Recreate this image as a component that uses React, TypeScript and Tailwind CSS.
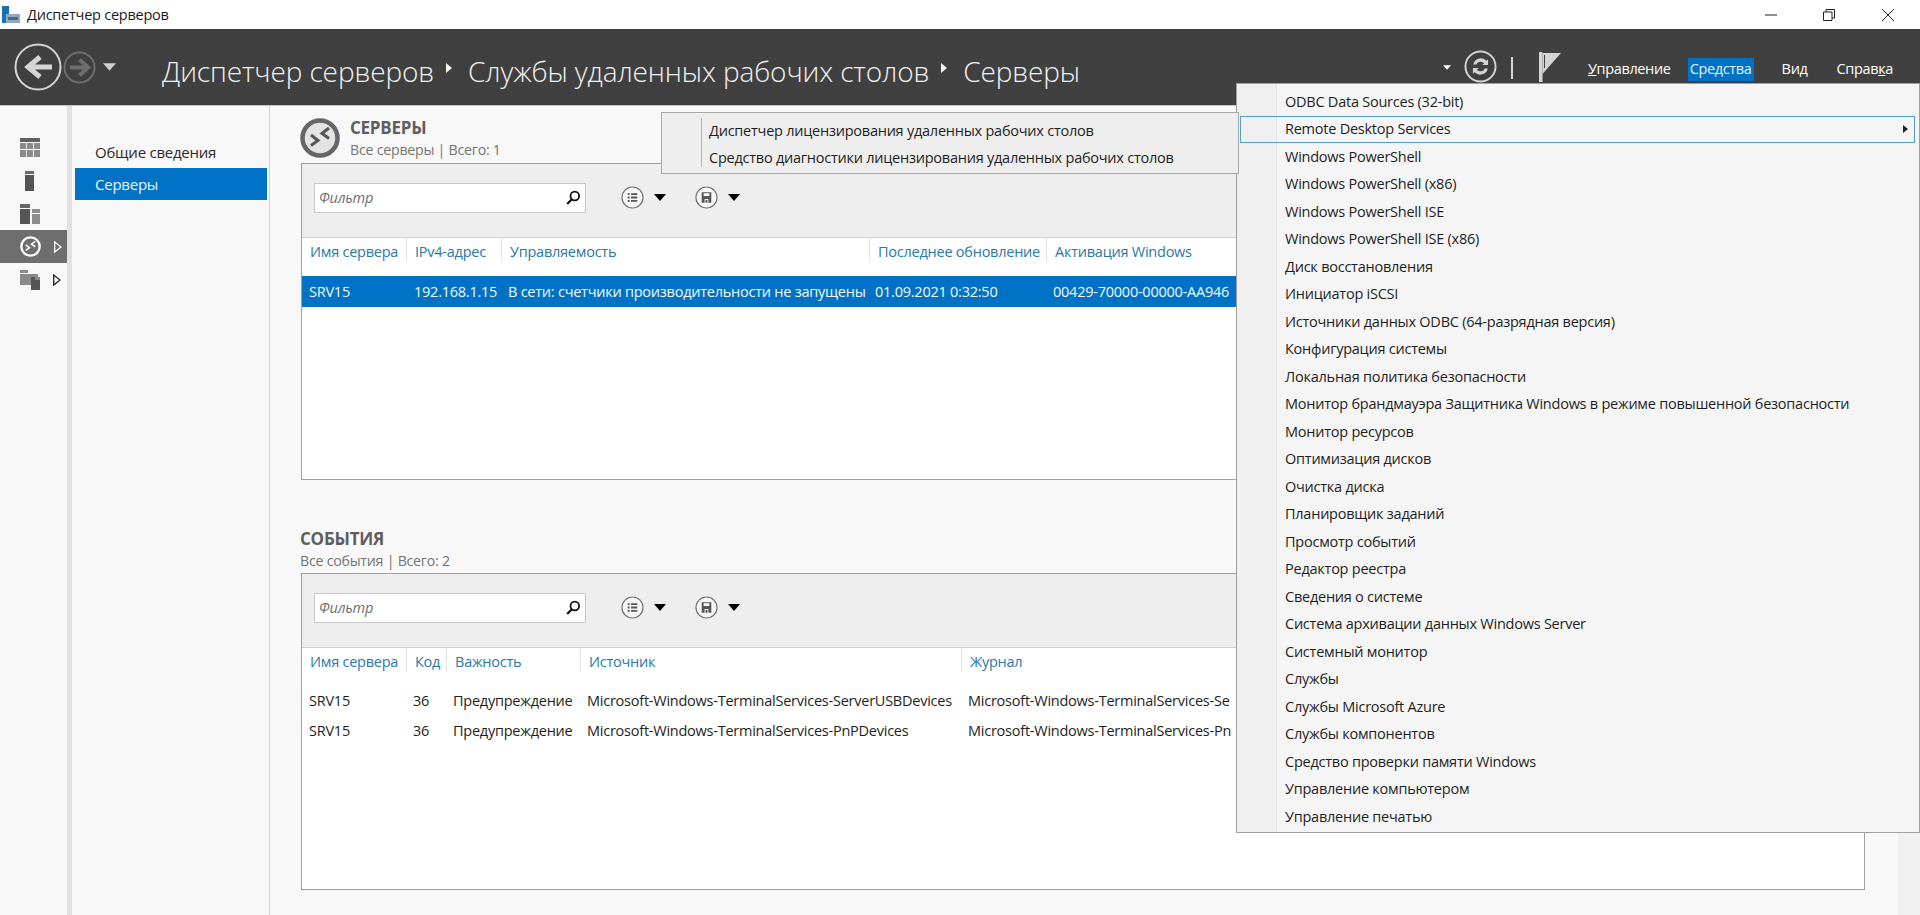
import React from 'react';

const toolItems = [
  'ODBC Data Sources (32-bit)',
  'Remote Desktop Services',
  'Windows PowerShell',
  'Windows PowerShell (x86)',
  'Windows PowerShell ISE',
  'Windows PowerShell ISE (x86)',
  'Диск восстановления',
  'Инициатор iSCSI',
  'Источники данных ODBC (64-разрядная версия)',
  'Конфигурация системы',
  'Локальная политика безопасности',
  'Монитор брандмауэра Защитника Windows в режиме повышенной безопасности',
  'Монитор ресурсов',
  'Оптимизация дисков',
  'Очистка диска',
  'Планировщик заданий',
  'Просмотр событий',
  'Редактор реестра',
  'Сведения о системе',
  'Система архивации данных Windows Server',
  'Системный монитор',
  'Службы',
  'Службы Microsoft Azure',
  'Службы компонентов',
  'Средство проверки памяти Windows',
  'Управление компьютером',
  'Управление печатью',
];

const serverCols = [
  { label: 'Имя сервера', width: 'w-[104px]' },
  { label: 'IPv4-адрес', width: 'w-[95px]' },
  { label: 'Управляемость', width: 'w-[368px]' },
  { label: 'Последнее обновление', width: 'w-[177px]' },
  { label: 'Активация Windows', width: 'w-[190px]' },
];

const eventCols = [
  { label: 'Имя сервера', width: 'w-[104px]' },
  { label: 'Код', width: 'w-[40px]' },
  { label: 'Важность', width: 'w-[134px]' },
  { label: 'Источник', width: 'w-[381px]' },
  { label: 'Журнал', width: 'w-[275px]' },
];

// the log column runs under the open menu, only its start is visible
const eventRows = [
  ['SRV15', '36', 'Предупреждение', 'Microsoft-Windows-TerminalServices-ServerUSBDevices', 'Microsoft-Windows-TerminalServices-Se'],
  ['SRV15', '36', 'Предупреждение', 'Microsoft-Windows-TerminalServices-PnPDevices', 'Microsoft-Windows-TerminalServices-Pn'],
];

function Caret({ className }: { className: string }) {
  return (
    <svg viewBox="0 0 12 7" className={className}>
      <path d="M0 0h12L6 7z" fill="currentColor" />
    </svg>
  );
}

function ListIcon() {
  return (
    <svg viewBox="0 0 24 24" className="w-[23px] h-[23px]">
      <circle cx="12" cy="12" r="11" fill="#f6f6f6" stroke="#707070" strokeWidth="1.2" />
      <path d="M7 7.500h2v2H7zM7 11h2v2H7zM7 14.500h2v2H7zM10.500 7.500H17v2h-6.500zM10.500 11H17v2h-6.500zM10.500 14.500H17v2h-6.500z" fill="#555" />
    </svg>
  );
}

function SaveIcon() {
  return (
    <svg viewBox="0 0 24 24" className="w-[23px] h-[23px]">
      <circle cx="12" cy="12" r="11" fill="#f6f6f6" stroke="#707070" strokeWidth="1.2" />
      <path d="M7 6.500h10v11h-3v-4h-4v4H7z" fill="#555" />
      <path d="M9 7.500h6v3H9z" fill="#f6f6f6" />
      <path d="M11 14.500h2v3h-2z" fill="#555" />
    </svg>
  );
}

function SearchIcon() {
  return (
    <svg viewBox="0 0 16 16" className="w-[16px] h-[16px]">
      <circle cx="9.800" cy="6" r="4.300" fill="none" stroke="#111" strokeWidth="1.800" />
      <path d="M6.800 9.200L2.200 14" stroke="#111" strokeWidth="2.200" />
    </svg>
  );
}

function RdsIcon({ className, ring, fill, mark }: { className: string; ring: string; fill: string; mark: string }) {
  return (
    <svg viewBox="0 0 40 40" className={className}>
      <circle cx="20" cy="20" r="17.500" fill={fill} stroke={ring} strokeWidth="4.500" />
      <path d="M11 18l7 5.500-7 5M29 11l-7 5.500 7 5" transform="translate(0 -1)" fill="none" stroke={mark} strokeWidth="3" />
    </svg>
  );
}

function Toolbar() {
  return (
    <div className="h-[74px] bg-[#eeeeee] border-b border-[#cfcfcf] flex items-center pl-[12px] pb-[6px] shrink-0">
      <div className="w-[272px] h-[30px] bg-white border border-[#c8c8c8] flex items-center justify-between pl-[4px] pr-[4px]">
        <span className="italic text-[#6e6e6e]">Фильтр</span>
        <SearchIcon />
      </div>
      <div className="ml-[35px] flex items-center gap-[10px] text-black">
        <ListIcon />
        <Caret className="w-[12px] h-[7px]" />
      </div>
      <div className="ml-[29px] flex items-center gap-[10px] text-black">
        <SaveIcon />
        <Caret className="w-[12px] h-[7px]" />
      </div>
    </div>
  );
}

function HeaderRow({ cols }: { cols: { label: string; width: string }[] }) {
  return (
    <div className="flex h-[38px] shrink-0 relative">
      {cols.map((c, i) => (
        <div
          key={c.label}
          className={`${c.width} shrink-0 pl-[8px] pt-[4px] text-[#2a78a8] whitespace-nowrap h-[24px] ${i > 0 ? 'border-l border-[#e2e2e2]' : ''}`}
        >
          {c.label}
        </div>
      ))}
    </div>
  );
}

function App() {
  return (
    <div className="relative w-[1920px] h-[915px] overflow-hidden flex flex-col bg-[#f8f8f8] text-[14.500px] leading-[20px] tracking-[-0.240px] text-[#1e1e1e] font-['Open_Sans','Noto_Sans',sans-serif]">
      {/* Title bar */}
      <div className="h-[29px] bg-white flex items-center shrink-0">
        <svg viewBox="0 0 20 18" className="w-[20px] h-[18px] ml-[1px] mr-[6px]">
          <path d="M1 0h7v10H1z" fill="#1b6fb5" />
          <path d="M1 10h4v7H1z" fill="#1b6fb5" />
          <path d="M5 8h14v9H5z" fill="#8fa9bf" />
          <path d="M7 11h10v3H7z" fill="#4d6a84" />
        </svg>
        <span className="text-[#1a1a1a]">Диспетчер серверов</span>
        <div className="ml-auto flex items-center h-full">
          <svg viewBox="0 0 12 12" className="w-[12px] h-[12px] mr-[46px]">
            <path d="M0 6h12" stroke="#222" strokeWidth="1" />
          </svg>
          <svg viewBox="0 0 12 12" className="w-[12px] h-[12px] mr-[47px]">
            <path d="M.5 3h8.500v8.500H.5zM3 3V.5h8.500V9H9" fill="none" stroke="#222" strokeWidth="1" />
          </svg>
          <svg viewBox="0 0 12 12" className="w-[12px] h-[12px] mr-[26px]">
            <path d="M0 0l12 12M12 0L0 12" stroke="#222" strokeWidth="1" />
          </svg>
        </div>
      </div>

      {/* Header */}
      <div className="h-[77px] bg-[#404040] border-b border-[#c4c4c4] flex items-center shrink-0 text-white">
        <svg viewBox="0 0 48 48" className="w-[48px] h-[48px] ml-[14px]">
          <circle cx="24" cy="24" r="22.500" fill="none" stroke="#d6d6d6" strokeWidth="2" />
          <path d="M38 24H17M26 14L14 24l12 10" fill="none" stroke="#d6d6d6" strokeWidth="5" />
        </svg>
        <svg viewBox="0 0 34 34" className="w-[33px] h-[33px] ml-[1px]">
          <circle cx="17" cy="17" r="15.500" fill="none" stroke="#6e6e6e" strokeWidth="2" />
          <path d="M7 17h17M17 9l9 8-9 8" fill="none" stroke="#6e6e6e" strokeWidth="4" />
        </svg>
        <Caret className="w-[13px] h-[8px] ml-[7px] text-[#cfcfcf]" />
        <div className="ml-[46px] mt-[8px] flex items-center text-[28px] font-light tracking-[-0.120px] text-[#f2f2f2] leading-[36px] whitespace-nowrap">
          <span>Диспетчер серверов</span>
          <svg viewBox="0 0 6 10" className="w-[6px] h-[10px] ml-[12px] mr-[16px] mb-[6px]"><path d="M0 0l6 5-6 5z" fill="#f2f2f2" /></svg>
          <span>Службы удаленных рабочих столов</span>
          <svg viewBox="0 0 6 10" className="w-[6px] h-[10px] ml-[12px] mr-[16px] mb-[6px]"><path d="M0 0l6 5-6 5z" fill="#f2f2f2" /></svg>
          <span>Серверы</span>
        </div>
        <div className="ml-auto flex items-center h-full">
          <Caret className="w-[8px] h-[5px] text-white mr-[13px]" />
          <svg viewBox="0 0 34 34" className="w-[33px] h-[33px] mt-[-1px]">
            <circle cx="17" cy="17" r="15.500" fill="none" stroke="#d4d4d4" strokeWidth="2" />
            <path d="M9.500 15a8 8 0 0 1 13.500-4l1.800-1.500v6h-6l2-1.800a5 5 0 0 0-8.300 1.300zM24.500 19a8 8 0 0 1-13.500 4l-1.800 1.500v-6h6l-2 1.800a5 5 0 0 0 8.300-1.300z" fill="#d4d4d4" />
          </svg>
          <div className="w-[2px] h-[22px] bg-[#d4d4d4] ml-[14px] mt-[2px]" />
          <svg viewBox="0 0 22 30" className="w-[22px] h-[30px] ml-[26px]">
            <path d="M0 0h3.500v30H0z" fill="#d4d4d4" />
            <path d="M3.500 1H22L3.500 22z" fill="#d4d4d4" />
            <path d="M5 3h1v13H5z" fill="#404040" />
          </svg>
          <div className="flex items-center ml-[26px] text-[14.500px] tracking-[-0.350px] text-white mt-[4px] whitespace-nowrap">
            <span className="px-[1px]"><span className="underline">У</span>правление</span>
            <span className="ml-[16px] w-[66px] h-[23px] bg-[#0072c6] flex items-center justify-center text-[#e4f1fb]">Сре<span className="underline">д</span>ства</span>
            <span className="ml-[28px]">Ви<span className="underline">д</span></span>
            <span className="ml-[29px] mr-[27px]">Справ<span className="underline">к</span>а</span>
          </div>
        </div>
      </div>

      {/* Body */}
      <div className="flex flex-1 min-h-0">
        <div className="w-[67px] pt-[25px] shrink-0 bg-[#f8f8f8] flex flex-col">
          <div className="h-[33px] flex items-center pl-[20px]">
            <svg viewBox="0 0 20 19" className="w-[20px] h-[19px]">
              <path d="M0 0h20v4H0z" fill="#5f5f5f" />
              <path d="M0 5h6.200v6H0zM7 5h6v6H7zM14 5h6v6h-6zM0 12h6.200v7H0zM7 12h6v7H7zM14 12h6v7h-6z" fill="#8a8a8a" />
            </svg>
          </div>
          <div className="h-[33px] flex items-center pl-[25px]">
            <svg viewBox="0 0 9 20" className="w-[9px] h-[20px]">
              <path d="M0 0h9v3H0z" fill="#6a6a6a" />
              <path d="M0 4h9v16H0z" fill="#555" />
            </svg>
          </div>
          <div className="h-[33px] flex items-center pl-[20px]">
            <svg viewBox="0 0 20 20" className="w-[20px] h-[20px]">
              <path d="M0 0h10v4H0z" fill="#666" />
              <path d="M0 5h10v15H0z" fill="#555" />
              <path d="M12 5h8v4h-8z" fill="#8c8c8c" />
              <path d="M12 10h8v10h-8z" fill="#8c8c8c" />
            </svg>
          </div>
          <div className="h-[33px] bg-[#6e6e6e] flex items-center pl-[20px]">
            <RdsIcon className="w-[21px] h-[21px]" ring="#ffffff" fill="#6e6e6e" mark="#ffffff" />
            <svg viewBox="0 0 8 12" className="w-[8px] h-[12px] ml-[13px]">
              <path d="M.7.900l6.300 5.100-6.300 5.100z" fill="none" stroke="#ffffff" strokeWidth="1.300" />
            </svg>
          </div>
          <div className="h-[33px] flex items-center pl-[20px]">
            <svg viewBox="0 0 20 20" className="w-[20px] h-[20px]">
              <path d="M0 0h8v3H0zM0 4h18v11H0z" fill="#8a8a8a" />
              <path d="M11 7h9v13h-9z" fill="#555" />
              <path d="M15 7h5v3h-5z" fill="#8a8a8a" />
            </svg>
            <svg viewBox="0 0 8 12" className="w-[8px] h-[12px] ml-[13px]">
              <path d="M.7.900l6.300 5.100-6.300 5.100z" fill="none" stroke="#222222" strokeWidth="1.300" />
            </svg>
          </div>
        </div>
        <div className="w-[5px] bg-[#e1e1e1] shrink-0" />
        <div className="w-[198px] shrink-0 border-r border-[#d2d2d2] pt-[30px] pr-[2px] pl-[3px]">
          <div className="w-[192px] h-[32px] flex items-center pl-[20px] text-[#2a2a2a] text-[15px]">Общие сведения</div>
          <div className="w-[192px] h-[32px] flex items-center pl-[20px] bg-[#0072c6] text-[#eaf5fc] text-[15px]">Серверы</div>
        </div>

        {/* Content */}
        <div className="flex-1 pl-[31px] min-w-0 relative flex flex-col">
          <div className="h-[57px] flex items-start shrink-0 pt-[12px] ml-[-1px]">
            <RdsIcon className="w-[40px] h-[40px]" ring="#666666" fill="#e3e3e3" mark="#555555" />
            <div className="ml-[10px] mt-[-2px]">
              <div className="text-[17px] font-bold text-[#5e5e5e] leading-[24px]">СЕРВЕРЫ</div>
              <div className="text-[#757575] text-[14.200px] leading-[20px]">Все серверы | Всего: 1</div>
            </div>
          </div>
          <div className="w-[1564px] h-[317px] border border-[#a0a0a0] bg-white flex flex-col shrink-0">
            <Toolbar />
            <HeaderRow cols={serverCols} />
            <div className="flex h-[31px] items-center bg-[#0072c6] text-[#f0f8fd] whitespace-nowrap">
              <div className="w-[104px] shrink-0 pl-[7px]">SRV15</div>
              <div className="w-[95px] shrink-0 pl-[8px]">192.168.1.15</div>
              <div className="w-[367px] shrink-0 pl-[7px] overflow-hidden">В сети: счетчики производительности не запущены</div>
              <div className="w-[178px] shrink-0 pl-[7px]">01.09.2021 0:32:50</div>
              <div className="w-[189px] shrink-0 pl-[7px]">00429-70000-00000-AA946</div>
            </div>
          </div>

          <div className="mt-[47px] h-[46px] shrink-0 ml-[-1px]">
            <div className="text-[17px] font-bold text-[#5e5e5e] leading-[24px]">СОБЫТИЯ</div>
            <div className="text-[#757575] text-[14.200px] leading-[20px]">Все события | Всего: 2</div>
          </div>
          <div className="w-[1564px] h-[317px] border border-[#a0a0a0] bg-white flex flex-col shrink-0">
            <Toolbar />
            <HeaderRow cols={eventCols} />
            <div>
              {eventRows.map((row, r) => (
                <div key={r} className="flex h-[30px] items-center whitespace-nowrap">
                  {row.map((cell, i) => (
                    <div key={i} className={`${eventCols[i].width} shrink-0 pl-[7px]`}>{cell}</div>
                  ))}
                </div>
              ))}
            </div>
          </div>
        </div>
        <div className="w-[22px] bg-[#f0f0f0] shrink-0" />
      </div>

      {/* Tools menu */}
      <div className="absolute top-[83px] left-[1236px] right-0 h-[750px] bg-[#f5f5f5] border border-[#a0a0a0] pt-[4px]">
        <div className="absolute left-0 top-0 bottom-0 w-[40px] bg-[#efefef] border-r border-[#e4e4e4]" />
        <div className="relative">
          {toolItems.map((item, i) => (
            <div
              key={item}
              className={`h-[27.500px] flex items-center whitespace-nowrap ${i === 1 ? 'ml-[3px] mr-[4px] pl-[44px] border-[1.500px] border-[#4f9fd0] justify-between pr-[6px]' : 'pl-[48px]'}`}
            >
              <span>{item}</span>
              {i === 1 && (
                <svg viewBox="0 0 5 8" className="w-[5px] h-[8px]"><path d="M0 0l5 4-5 4z" fill="#222" /></svg>
              )}
            </div>
          ))}
        </div>
      </div>

      {/* Remote Desktop Services submenu */}
      <div className="absolute top-[112px] left-[661px] w-[578px] h-[62px] bg-[#eeeeee] border border-[#a8a8a8] py-[4px]">
        <div className="absolute left-[39px] top-[5px] bottom-[6px] w-px bg-[#b8b8b8]" />
        <div className="h-[27px] flex items-center pl-[47px] whitespace-nowrap">Диспетчер лицензирования удаленных рабочих столов</div>
        <div className="h-[27px] flex items-center pl-[47px] whitespace-nowrap">Средство диагностики лицензирования удаленных рабочих столов</div>
      </div>
    </div>
  );
}

export default App;
